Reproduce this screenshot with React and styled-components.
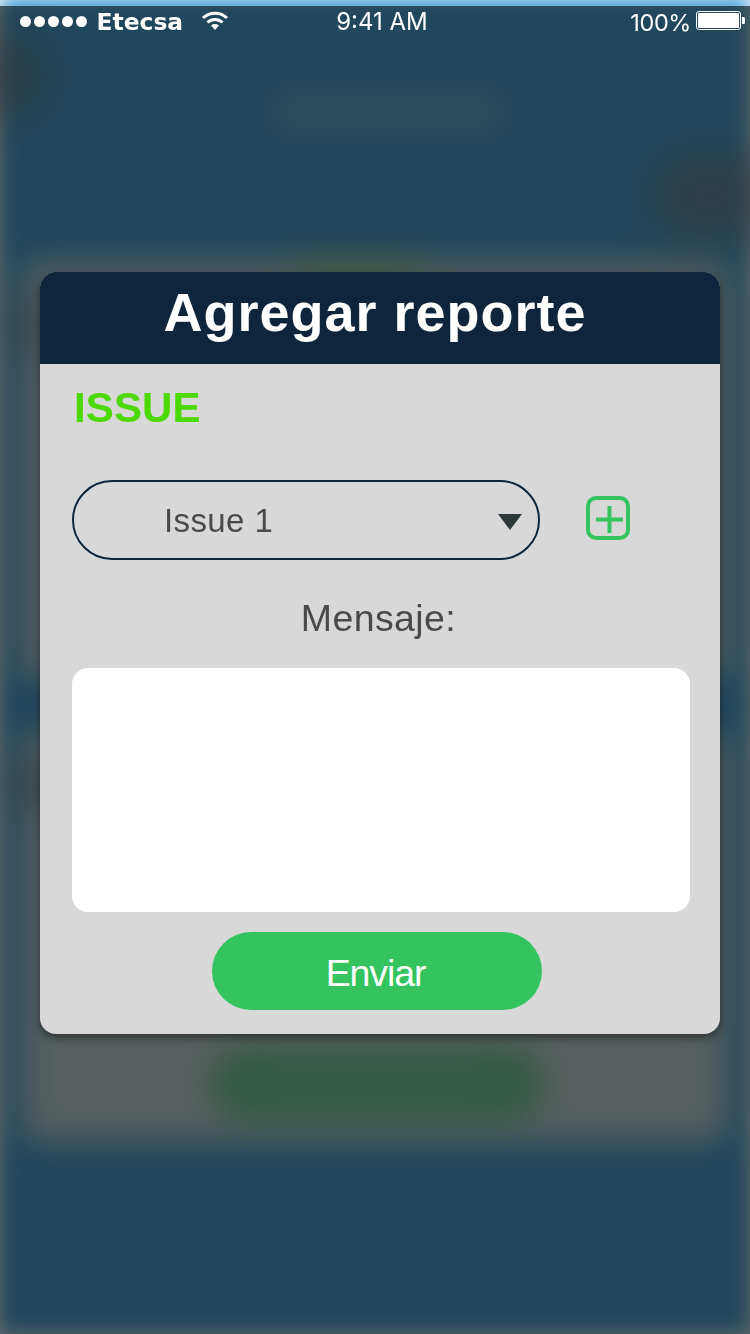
import React from "react";
import styled, { createGlobalStyle } from "styled-components";

const GlobalStyle = createGlobalStyle`
  *, *::before, *::after { box-sizing: border-box; }
  body { margin: 0; background: #fff; }
`;

const Screen = styled.div`
  position: relative;
  width: 750px;
  height: 1334px;
  overflow: hidden;
  background: #fff;
  font-family: "Liberation Sans", Arial, sans-serif;
`;

const Backdrop = styled.div`
  position: absolute;
  inset: -5px 0 0 0;
  padding: 267px 22px 0 22px;
  display: flex;
  flex-direction: column;
  gap: 52px;
  background: #4da3d8;
  filter: blur(10px);
`;

const BackCard = styled.div`
  height: ${(p) => p.$height}px;
  border-radius: 16px;
  background: #d8e2e0;
  filter: blur(14px);
`;

const Blob = styled.div`
  position: absolute;
  left: ${(p) => p.$x}px;
  top: ${(p) => p.$y + 5}px;
  width: ${(p) => p.$w}px;
  height: ${(p) => p.$h}px;
  border-radius: ${(p) => p.$h / 2}px;
  background: ${(p) => p.$color};
  filter: blur(${(p) => p.$soft || 8}px);
`;

const Shade = styled.div`
  position: absolute;
  inset: 6px 0 0 0;
  background: rgba(5, 12, 12, 0.606);
`;

const Content = styled.div`
  position: relative;
  display: flex;
  flex-direction: column;
  height: 100%;
`;

const StatusBar = styled.header`
  display: grid;
  grid-template-columns: 1fr auto 1fr;
  align-items: center;
  height: 44px;
  padding: 0 5px 0 20px;
  color: #fff;
`;

const Carrier = styled.div`
  display: flex;
  align-items: center;
  font: bold 23.4px/28px "DejaVu Sans", Verdana, sans-serif;
`;

const Signal = styled.div`
  display: flex;
  gap: 3px;
  margin: -2px 9.5px 0 0;
`;

const Dot = styled.i`
  width: 11px;
  height: 11px;
  border-radius: 50%;
  background: #fff;
`;

const WifiIcon = styled.svg`
  margin: -3px 0 0 18px;
`;

const Time = styled.div`
  padding-right: 1px;
  font: 400 24px/28px Inter, sans-serif;
`;

const Power = styled.div`
  display: flex;
  align-items: center;
  justify-content: flex-end;
  gap: 5px;
  margin-top: -3px;
  font: 400 23.5px/28px Inter, sans-serif;
  letter-spacing: -0.4px;
`;

const Percent = styled.span`
  padding-top: 4px;
`;

const Modal = styled.main`
  display: flex;
  flex-direction: column;
  width: 680px;
  height: 762px;
  margin: 228px 0 0 40px;
  border-radius: 16px;
  overflow: hidden;
  background: #d8d8d8;
  box-shadow: 0 4px 8px rgba(0, 0, 0, 0.45);
`;

const ModalTitle = styled.h1`
  height: 92px;
  margin: 0;
  padding-right: 10px;
  background: #0e253b;
  color: #fff;
  font-size: 54px;
  line-height: 80px;
  letter-spacing: 1px;
  text-align: center;
`;

const ModalBody = styled.div`
  display: flex;
  flex-direction: column;
  padding: 20px 30px 24px 32px;
`;

const SectionTitle = styled.h2`
  margin: 0 0 48px 2px;
  color: #4cd900;
  font-size: 42px;
  line-height: 48px;
  letter-spacing: 0.1px;
`;

const IssueRow = styled.div`
  display: flex;
  align-items: center;
  gap: 46px;
`;

const Select = styled.div`
  display: flex;
  align-items: center;
  justify-content: space-between;
  width: 468px;
  height: 80px;
  padding: 2px 16px 0 90px;
  border: 2px solid #0e253b;
  border-radius: 40px;
  color: #4a4a4a;
  font-size: 33px;
  letter-spacing: 0.4px;
`;

const Arrow = styled.svg`
  margin-top: 2px;
`;

const AddButton = styled.button`
  display: flex;
  margin: -4px 0 0;
  padding: 0;
  border: 0;
  background: none;
`;

const MessageLabel = styled.label`
  margin: 38px 0 30px;
  padding-right: 5px;
  color: #4a4a4a;
  font-size: 37.5px;
  line-height: 40px;
  letter-spacing: 0.4px;
  text-align: center;
`;

const MessageInput = styled.textarea`
  height: 244px;
  border: 0;
  border-radius: 16px;
  background: #fff;
  resize: none;
`;

const SubmitButton = styled.button`
  width: 330px;
  height: 78px;
  margin: 20px 0 0 140px;
  padding: 5px 3px 0 0;
  border: 0;
  border-radius: 39px;
  background: #34c35f;
  color: #fff;
  font: 37.5px "Liberation Sans", Arial, sans-serif;
  letter-spacing: -1.1px;
`;

export default function App() {
  return (
    <Screen>
      <GlobalStyle />
      <Backdrop>
        <BackCard $height={417} />
        <BackCard $height={410} />
        <Blob $x={266} $y={86} $w={244} $h={52} $color="rgba(225,225,225,0.24)" $soft={11} />
        <Blob $x={-50} $y={32} $w={100} $h={88} $color="rgba(120,115,110,0.48)" $soft={18} />
        <Blob $x={648} $y={150} $w={130} $h={92} $color="rgba(125,130,135,0.58)" $soft={18} />
        <Blob $x={290} $y={258} $w={135} $h={38} $color="rgba(155,210,125,0.6)" $soft={12} />
        <Blob $x={0} $y={295} $w={60} $h={60} $color="rgba(100,130,140,0.35)" $soft={12} />
        <Blob $x={5} $y={760} $w={60} $h={50} $color="rgba(100,120,125,0.4)" $soft={12} />
        <Blob $x={208} $y={1044} $w={338} $h={82} $color="rgba(130,212,162,0.95)" $soft={11} />
        <Blob $x={225} $y={1060} $w={50} $h={40} $color="rgba(95,195,125,0.25)" />
        <Blob $x={475} $y={1060} $w={50} $h={40} $color="rgba(95,195,125,0.25)" />
      </Backdrop>
      <Shade />
      <Content>
        <StatusBar>
          <Carrier>
            <Signal>
              <Dot /><Dot /><Dot /><Dot /><Dot />
            </Signal>
            Etecsa
            <WifiIcon width="28" height="20" viewBox="0 0 28 20" fill="none" stroke="#fff" strokeWidth="3">
              <path d="M2 7a17.500 17.500 0 0 1 24 0" />
              <path d="M6.500 11.500a11 11 0 0 1 15 0" />
              <path d="M14 19l-4-4.500a6 5 0 0 1 8 0z" fill="#fff" stroke="none" />
            </WifiIcon>
          </Carrier>
          <Time>9:41 AM</Time>
          <Power>
            <Percent>100%</Percent>
            <svg width="49" height="19" viewBox="0 0 49 19">
              <rect x="0.5" y="0.5" width="44" height="18" rx="2.5" fill="none" stroke="#fff" />
              <rect x="2" y="2" width="41" height="15" rx="1" fill="#fff" />
              <path d="M46 6h1.5q1.5 0 1.5 1.5v4q0 1.500-1.500 1.500H46z" fill="#fff" />
            </svg>
          </Power>
        </StatusBar>
        <Modal>
          <ModalTitle>Agregar reporte</ModalTitle>
          <ModalBody>
            <SectionTitle>ISSUE</SectionTitle>
            <IssueRow>
              <Select>
                Issue 1
                <Arrow width="24" height="16" viewBox="0 0 24 16">
                  <path d="M0 0h24L12 16z" fill="#2d3638" />
                </Arrow>
              </Select>
              <AddButton aria-label="Agregar">
                <svg width="44" height="44" viewBox="0 0 44 44" fill="none" stroke="#34c35f" strokeWidth="4">
                  <rect x="2" y="2" width="40" height="40" rx="8" />
                  <path d="M23.500 10v27M10 23.500h27" />
                </svg>
              </AddButton>
            </IssueRow>
            <MessageLabel htmlFor="mensaje">Mensaje:</MessageLabel>
            <MessageInput id="mensaje" />
            <SubmitButton>Enviar</SubmitButton>
          </ModalBody>
        </Modal>
      </Content>
    </Screen>
  );
}
